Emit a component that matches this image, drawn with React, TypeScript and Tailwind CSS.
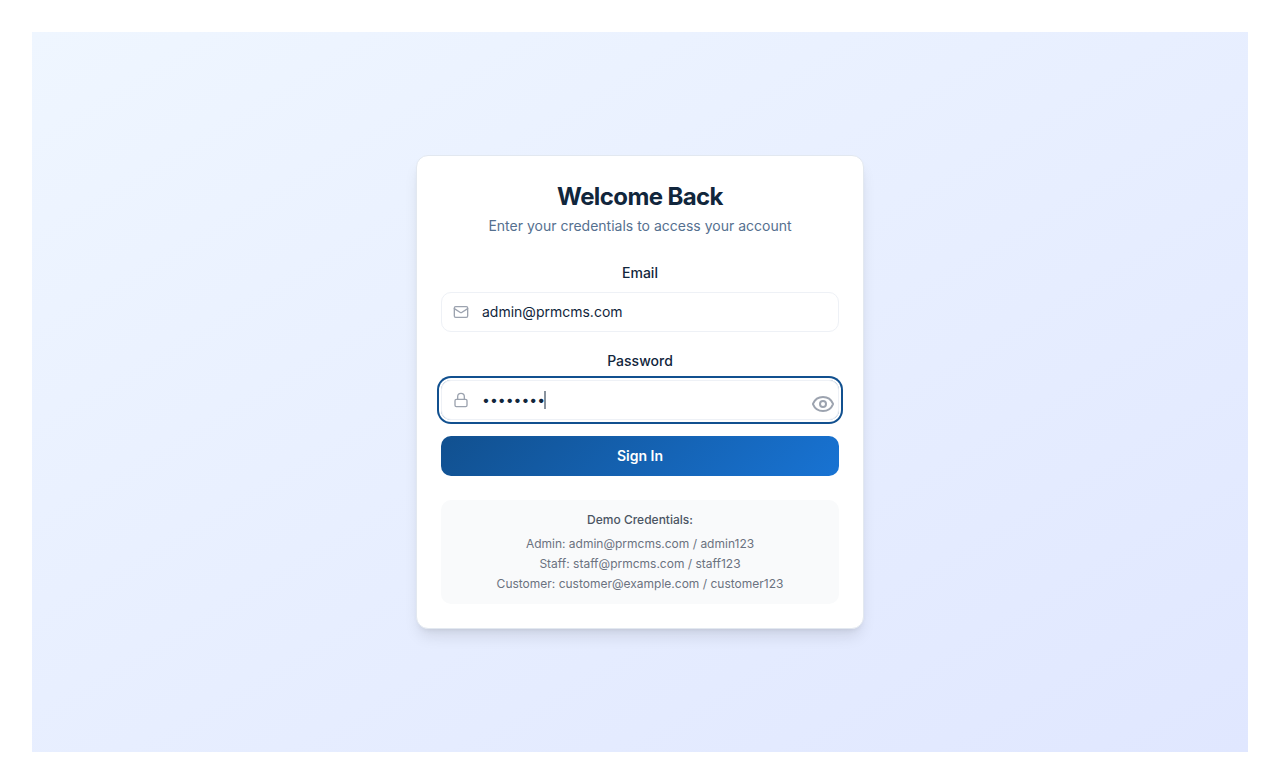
import { useState } from "react";
import { Eye, Lock, Mail } from "lucide-react";

const accounts = [
  "Admin: admin@prmcms.com / admin123",
  "Staff: staff@prmcms.com / staff123",
  "Customer: customer@example.com / customer123",
];

export default function App() {
  const [email, setEmail] = useState("admin@prmcms.com");

  return (
    <div className="h-[784px] bg-white p-8 font-['Inter',sans-serif] text-[#11263c]">
      <main className="flex h-full items-center justify-center bg-linear-to-br/srgb from-[#eff6ff] to-[#e0e7ff]">
        <section className="w-[448px] rounded-xl border border-[#e2e8f0] bg-white p-6 text-center shadow-lg">
          <header className="flex flex-col gap-[3px] pb-6">
            <h1 className="pt-px text-2xl font-bold tracking-tight">Welcome Back</h1>
            <p className="text-sm text-[#55708f]">Enter your credentials to access your account</p>
          </header>
          <form className="flex flex-col gap-4" onSubmit={(e) => e.preventDefault()}>
            <div className="flex flex-col gap-2">
              <label htmlFor="email" className="pt-px text-sm leading-[23px] font-medium">Email</label>
              <div className="flex h-10 items-center gap-3 rounded-[10px] border border-[#eef1f6] px-[11px]">
                <Mail className="size-4 shrink-0 text-[#9ca3af]" />
                <input
                  id="email"
                  type="text"
                  className="min-w-0 flex-1 pl-px text-sm outline-none"
                  value={email}
                  onChange={(e) => setEmail(e.target.value)}
                />
              </div>
            </div>
            <div className="flex flex-col gap-2">
              <span className="pt-px text-sm leading-[23px] font-medium">Password</span>
              <div className="flex h-10 items-center rounded-[10px] border border-[#eef1f6] pr-[3px] pl-[11px] ring-2 ring-[#11508f] ring-offset-2">
                <Lock className="size-4 shrink-0 text-[#9ca3af]" />
                <span className="ml-[13px] text-sm">••••••••</span>
                <span className="-ml-px h-[18px] w-0.5 bg-[#11263c]/50" />
                <Eye className="mt-2 ml-auto size-6 text-[#9ca3af]" />
              </div>
            </div>
            <button className="h-10 rounded-[10px] bg-linear-[135deg] from-[#11508f] to-[#1873d3] text-sm font-semibold text-white">
              Sign In
            </button>
          </form>
          <div className="mt-6 flex flex-col gap-1 rounded-[10px] bg-[#f9fafb] p-3 text-xs text-[#6b7280]">
            <p className="mb-1 font-medium text-[#4b5563]">Demo Credentials:</p>
            {accounts.map((line) => (
              <p key={line}>{line}</p>
            ))}
          </div>
        </section>
      </main>
    </div>
  );
}
